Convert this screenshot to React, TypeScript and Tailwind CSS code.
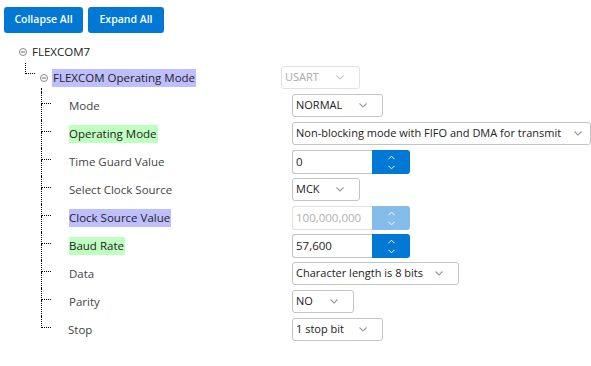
import React from 'react';

type Control =
  | { kind: 'select'; value: string; w: string; wide?: boolean }
  | { kind: 'number'; value: string; disabled?: boolean };

type Row = { label: string; hl?: 'green' | 'blue'; control: Control };

const rows: Row[] = [
  { label: 'Mode', control: { kind: 'select', value: 'NORMAL', w: 'w-[91px]' } },
  {
    label: 'Operating Mode',
    hl: 'green',
    control: { kind: 'select', value: 'Non-blocking mode with FIFO and DMA for transmit', w: 'w-[299px]', wide: true },
  },
  { label: 'Time Guard Value', control: { kind: 'number', value: '0' } },
  { label: 'Select Clock Source', control: { kind: 'select', value: 'MCK', w: 'w-[68px]' } },
  { label: 'Clock Source Value', hl: 'blue', control: { kind: 'number', value: '100,000,000', disabled: true } },
  { label: 'Baud Rate', hl: 'green', control: { kind: 'number', value: '57,600' } },
  { label: 'Data', control: { kind: 'select', value: 'Character length is 8 bits', w: 'w-[167px]' } },
  { label: 'Parity', control: { kind: 'select', value: 'NO', w: 'w-[62px]' } },
  { label: 'Stop', control: { kind: 'select', value: '1 stop bit', w: 'w-[91px]' } },
];

function Chevron({ up, color = '#9a9a9a', w = 8 }: { up?: boolean; color?: string; w?: number }) {
  return (
    <svg width={w} height="5" viewBox="0 0 8 5" fill="none" className="shrink-0">
      <path d={up ? 'M0.5 4.5L4 1L7.5 4.5' : 'M0.5 0.5L4 4L7.5 0.5'} stroke={color} strokeWidth="1.1" />
    </svg>
  );
}

function Minus() {
  return (
    <svg width="8" height="8" viewBox="0 0 8 8" fill="none" className="shrink-0">
      <circle cx="4" cy="4" r="3.5" stroke="#7a7a7a" strokeWidth="0.9" />
      <path d="M2 4H6" stroke="#555" strokeWidth="0.9" />
    </svg>
  );
}

function Select({ value, w, disabled, wide }: { value: string; w: string; disabled?: boolean; wide?: boolean }) {
  return (
    <div
      className={`${w} h-[23px] shrink-0 flex items-center justify-between pl-[3px] ${wide ? 'pr-[8px]' : 'pr-[15px]'} border rounded-[3px] text-[11px] ${
        disabled ? 'border-[#e2e2e2] text-[#a8a8a8]' : 'border-[#c4c4c4] text-[#222]'
      }`}
    >
      <span className="whitespace-nowrap">{value}</span>
      <Chevron color={disabled ? '#c8c8c8' : '#9a9a9a'} />
    </div>
  );
}

function NumberBox({ value, disabled }: { value: string; disabled?: boolean }) {
  return (
    <div className="flex h-[24px]">
      <div
        className={`w-[80px] flex items-center pl-[3px] border border-r-0 rounded-l-[3px] text-[11.5px] ${
          disabled ? 'border-[#e2e2e2] text-[#b0b0b0]' : 'border-[#c4c4c4] text-[#222]'
        }`}
      >
        {value}
      </div>
      <div
        className={`w-[38px] flex flex-col items-center justify-center gap-[5px] rounded-r-[3px] ${
          disabled ? 'bg-[#84bdea]' : 'bg-[#0078d4]'
        }`}
      >
        <Chevron up color="#fff" w={7} />
        <Chevron color="#fff" w={7} />
      </div>
    </div>
  );
}

export default function App() {
  return (
    <div className="w-[591px] h-[366px] overflow-hidden bg-white text-[11.5px] text-[#444]" style={{ fontFamily: '"Open Sans", sans-serif' }}>
      {/* toolbar */}
      <div className="flex gap-[5px] pl-[4px] pt-[7px]">
        <button className="w-[79px] h-[26px] rounded-[3px] bg-[#0078d4] text-white text-[10.5px] font-semibold">Collapse All</button>
        <button className="w-[76px] h-[26px] rounded-[3px] bg-[#0078d4] text-white text-[10.5px] font-semibold">Expand All</button>
      </div>

      {/* root node */}
      <div className="flex items-center h-[24px] mt-[7px] pl-[19px] gap-[5px] text-[#222]">
        <Minus />
        <span>FLEXCOM7</span>
      </div>

      {/* level 2 node */}
      <div className="flex h-[28px] pl-[25px]">
        <div className="w-[256px] shrink-0 flex">
          <div className="w-[10px] h-[11px] -mt-[1px] border-l border-b border-dotted border-black" />
          <div className="flex flex-col ml-[5px] pt-[10px]">
            <Minus />
            <div className="flex-1 ml-[1px] mt-[6px] border-l border-dotted border-black" />
          </div>
          <div className="ml-[4px] pt-[5px]">
            <span className="inline-block h-[18px] leading-[18px] px-[1px] bg-[#bfbfff] text-[#222]">FLEXCOM Operating Mode</span>
          </div>
        </div>
        <div className="pt-[2px]">
          <Select value="USART" w="w-[79px]" disabled />
        </div>
      </div>

      {/* children */}
      <div className="pl-[41px]">
        {rows.map((r, i) => {
          const last = i === rows.length - 1;
          return (
            <div key={r.label} className="flex h-[28px]">
              <div className="w-[251px] shrink-0 flex">
                <div className="w-[10px] flex flex-col">
                  <div className="h-[12px] border-l border-b border-dotted border-black" />
                  {!last && <div className="flex-1 border-l border-dotted border-black" />}
                </div>
                <div className={`${last ? 'ml-[17px]' : 'ml-[18px]'} pt-[5px]`}>
                  <span
                    className={`inline-block h-[18px] leading-[18px] pr-[1px] ${
                      r.hl === 'green' ? 'bg-[#bfffbf] text-[#222]' : r.hl === 'blue' ? 'bg-[#bfbfff] text-[#222]' : ''
                    }`}
                  >
                    {r.label}
                  </span>
                </div>
              </div>
              <div className="pt-[2px]">
                {r.control.kind === 'select' ? (
                  <Select value={r.control.value} w={r.control.w} wide={r.control.wide} />
                ) : (
                  <NumberBox value={r.control.value} disabled={r.control.disabled} />
                )}
              </div>
            </div>
          );
        })}
      </div>
    </div>
  );
}
